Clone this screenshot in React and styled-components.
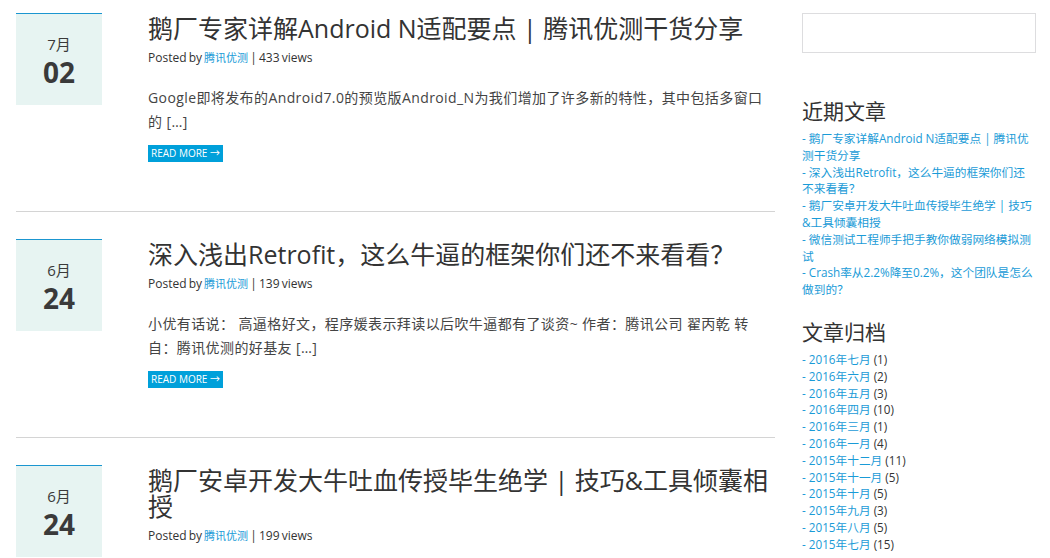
import React from 'react'
import styled, { createGlobalStyle } from 'styled-components'

const GlobalStyle = createGlobalStyle`
  body {
    margin: 0;
    background: #fff;
    font-family: "Open Sans", "Noto Sans CJK SC", sans-serif;
    color: #444;
  }
`

const posts = [
  {
    month: '7月',
    day: '02',
    title: '鹅厂专家详解Android N适配要点 | 腾讯优测干货分享',
    views: 433,
    excerpt: 'Google即将发布的Android7.0的预览版Android_N为我们增加了许多新的特性，其中包括多窗口的 […]',
  },
  {
    month: '6月',
    day: '24',
    title: '深入浅出Retrofit，这么牛逼的框架你们还不来看看？',
    views: 139,
    excerpt: '小优有话说： 高逼格好文，程序媛表示拜读以后吹牛逼都有了谈资~ 作者：腾讯公司 翟丙乾 转自：腾讯优测的好基友 […]',
  },
  {
    month: '6月',
    day: '24',
    title: '鹅厂安卓开发大牛吐血传授毕生绝学 | 技巧&工具倾囊相授',
    views: 199,
    excerpt: '',
  },
]

const recent = [
  '鹅厂专家详解Android N适配要点 | 腾讯优测干货分享',
  '深入浅出Retrofit，这么牛逼的框架你们还不来看看？',
  '鹅厂安卓开发大牛吐血传授毕生绝学 | 技巧&工具倾囊相授',
  '微信测试工程师手把手教你做弱网络模拟测试',
  'Crash率从2.2%降至0.2%，这个团队是怎么做到的？',
]

const archives = [
  ['2016年七月', 1],
  ['2016年六月', 2],
  ['2016年五月', 3],
  ['2016年四月', 10],
  ['2016年三月', 1],
  ['2016年一月', 4],
  ['2015年十二月', 11],
  ['2015年十一月', 5],
  ['2015年十月', 5],
  ['2015年九月', 3],
  ['2015年八月', 5],
  ['2015年七月', 15],
]

function Post({ post }) {
  return (
    <PostRow>
      <DateBox>
        <Month>{post.month}</Month>
        <Day>{post.day}</Day>
      </DateBox>
      <PostBody>
        <Title>{post.title}</Title>
        <Meta>
          Posted by <Author href="#">腾讯优测</Author> | {post.views} views
        </Meta>
        {post.excerpt && <Excerpt>{post.excerpt}</Excerpt>}
        {post.excerpt && <ReadMore href="#">Read more →</ReadMore>}
      </PostBody>
    </PostRow>
  )
}

function App() {
  return (
    <Page>
      <GlobalStyle />
      <Main>
        {posts.map((p, i) => (
          <Post key={i} post={p} />
        ))}
      </Main>
      <Sidebar>
        <SearchBox />
        <WidgetTitle>近期文章</WidgetTitle>
        <List>
          {recent.map((r) => (
            <Item key={r}>
              <Link href="#">- {r}</Link>
            </Item>
          ))}
        </List>
        <WidgetTitle>文章归档</WidgetTitle>
        <List>
          {archives.map(([name, n]) => (
            <Item key={name}>
              <Link href="#">- {name}</Link> <Count>({n})</Count>
            </Item>
          ))}
        </List>
      </Sidebar>
    </Page>
  )
}

const Page = styled.div`
  display: flex;
  gap: 27px;
  padding: 13px 14px 0 16px;
  height: 558px;
  box-sizing: border-box;
  overflow: hidden;
`

const Main = styled.div`
  width: 759px;
  flex-shrink: 0;
`

const PostRow = styled.article`
  display: flex;
  gap: 46px;
  padding-bottom: 49px;
  margin-bottom: 27px;
  border-bottom: 1px solid #d4d4d4;
`

const DateBox = styled.div`
  width: 86px;
  height: 92px;
  flex-shrink: 0;
  background: #e7f4f2;
  border-top: 1px solid #1b96d0;
  box-sizing: border-box;
  text-align: center;
  color: #3a3a3a;
  padding-top: 20px;
`

const Month = styled.div`
  font-size: 15px;
  line-height: 20px;
`

const Day = styled.div`
  margin-top: 2px;
  font-size: 28px;
  font-weight: 700;
  line-height: 32px;
`

const PostBody = styled.div`
  flex: 1;
  min-width: 0;
`

const Title = styled.h2`
  margin: 2px 0 0;
  font-size: 25px;
  font-weight: 400;
  line-height: 26px;
  color: #333;
`

const Meta = styled.div`
  margin-top: 8px;
  font-size: 12px;
  line-height: 18px;
  word-spacing: -1px;
  color: #333;
`

const Link = styled.a`
  color: #1a9bd7;
  text-decoration: none;
`

const Author = styled(Link)`
  font-size: 11px;
`

const Excerpt = styled.p`
  margin: 19px 0 0;
  font-size: 14px;
  line-height: 24px;
  letter-spacing: 0.4px;
  color: #444;
`

const ReadMore = styled.a`
  display: inline-block;
  margin-top: 11px;
  padding: 0 3px;
  height: 17px;
  line-height: 17px;
  background: #00a0da;
  color: #fff;
  font-size: 10px;
  text-transform: uppercase;
  text-decoration: none;
`

const Sidebar = styled.aside`
  width: 234px;
  flex-shrink: 0;
`

const SearchBox = styled.div`
  height: 40px;
  border: 1px solid #dddddf;
  box-sizing: border-box;
  margin-bottom: 45px;
`

const WidgetTitle = styled.h3`
  margin: 0 0 6px;
  font-size: 21px;
  font-weight: 400;
  line-height: 26px;
  color: #333;
`

const List = styled.ul`
  list-style: none;
  margin: 0 0 21px;
  padding: 0;
`

const Item = styled.li`
  font-size: 11.7px;
  line-height: 16.8px;
`

const Count = styled.span`
  color: #333;
`

export default App
